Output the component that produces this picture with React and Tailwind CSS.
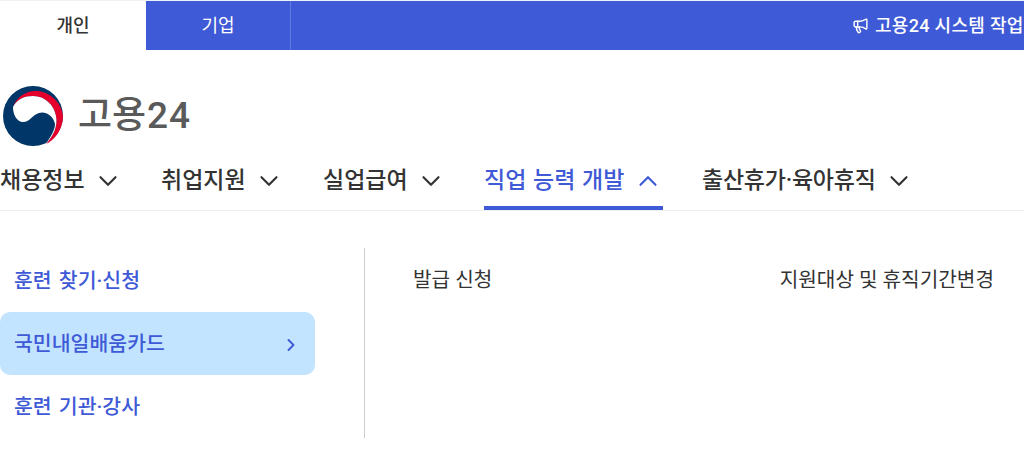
import { ChevronDown, ChevronUp, ChevronRight, Megaphone } from "lucide-react";

const font = { fontFamily: 'Roboto, "Noto Sans CJK KR", "Noto Sans", sans-serif' };

const navItems = [
  { label: "채용정보", width: "w-[161px]" },
  { label: "취업지원", width: "w-[162px]" },
  { label: "실업급여", width: "w-[161px]" },
  { label: "직업 능력 개발", width: "w-[218px]", active: true },
  { label: "출산휴가·육아휴직", width: "w-[220px]", tight: true },
];

function Logo() {
  return (
    <svg width="60" height="60" viewBox="0 0 60 60" className="shrink-0">
      <circle cx="30" cy="30" r="30" fill="#003668" />
      <path
        d="M10 21C14 10 24 4 35 5C50 7 59 19 60 30C60 43 52 54 43 58C50 50 55 41 53 30C51 19 42 10 30 10C22 10 14 13 10 21Z"
        fill="#e4002b"
      />
      <path
        d="M10 21C14 13 22 10 30 10C42 10 51 19 53 30C55 41 50 50 43 58C48 50 52 44 52 38C50 29 42 25 36 27C29 29 27 36 20 36C14 36 10 29 10 21Z"
        fill="#ffffff"
      />
    </svg>
  );
}

function NavItem({ label, width, active, tight }) {
  return (
    <div className={`${width} shrink-0`}>
      <div
        className={`inline-flex h-[50px] items-center border-b-[4px] pb-[4px] ${
          active ? "gap-[9px] border-[#3f5ad6] text-[#3f5ad6]" : "gap-[8px] border-transparent text-[#333333]"
        }`}
      >
        <span
          className={`text-[23px] font-medium whitespace-nowrap [word-spacing:1px] ${
            tight ? "tracking-[-0.25px]" : ""
          }`}
        >
          {label}
        </span>
        {active ? (
          <ChevronUp size={30} strokeWidth={1.7} />
        ) : (
          <ChevronDown size={30} strokeWidth={1.7} />
        )}
      </div>
    </div>
  );
}

export default function App() {
  return (
    <div className="h-[474px] w-[1024px] overflow-hidden bg-white" style={font}>
      <div className="pt-[1px] bg-[#eef1f6]">
        <div className="flex h-[49px] bg-[#3f5ad6]">
          <div className="flex w-[146px] shrink-0 items-center justify-center bg-white text-[18px] font-medium text-[#333333]">
            개인
          </div>
          <div className="flex w-[145px] shrink-0 items-center justify-center border-r border-[#6279e0] text-[18px] text-white">
            기업
          </div>
          <div className="flex min-w-0 flex-1 items-center gap-[6px] overflow-hidden whitespace-nowrap pl-[561px] text-[18px] font-medium tracking-[0.3px] text-white">
            <Megaphone size={17} strokeWidth={2} className="shrink-0" />
            <span>고용24 시스템 작업</span>
          </div>
        </div>
      </div>

      <div className="flex h-[110px] items-start gap-[15px] pl-[3px] pt-[36px]">
        <Logo />
        <span className="mt-[3px] text-[37px] leading-[54px] font-medium text-[#5a5a5a]">
          고용<span className="ml-[1px] tracking-[1px]">24</span>
        </span>
      </div>

      <nav className="flex h-[51px] border-b border-[#eeeeee]">
        {navItems.map((item) => (
          <NavItem key={item.label} {...item} />
        ))}
      </nav>

      <div className="flex pt-[37px]">
        <div className="flex h-[190px] w-[365px] border-r border-[#cccccc]">
          <ul className="flex w-[315px] flex-col text-[20.5px] font-medium text-[#3f5ad6] [word-spacing:2px]">
            <li className="flex h-[64px] items-center px-[14px] pt-[2px]">훈련 찾기·신청</li>
            <li className="flex h-[63px] items-center justify-between rounded-[10px] bg-[#c2e4ff] pl-[14px] pr-[14px] pt-[2px]">
              <span>국민내일배움카드</span>
              <ChevronRight size={20} strokeWidth={2.3} />
            </li>
            <li className="flex h-[63px] items-center px-[14px] pt-[2px]">훈련 기관·강사</li>
          </ul>
        </div>
        <div className="flex h-[64px] flex-1 items-center justify-between pl-[48px] pr-[30px] text-[20.2px] text-[#333333]">
          <span>발급 신청</span>
          <span>지원대상 및 휴직기간변경</span>
        </div>
      </div>
    </div>
  );
}
